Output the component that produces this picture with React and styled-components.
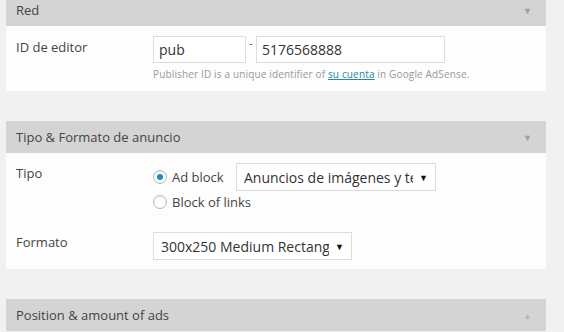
import React from 'react';
import styled, { createGlobalStyle } from 'styled-components';

const GlobalStyle = createGlobalStyle`
  html, body {
    margin: 0;
    padding: 0;
    background: #f1f1f1;
    font-family: "Open Sans", "Liberation Sans", sans-serif;
    color: #444;
    overflow: hidden;
  }
`;

const Page = styled.div`
  width: 540px;
  margin: -6px 0 0 6px;
  display: flex;
  flex-direction: column;
  gap: 30px;
`;

const Panel = styled.section`
  display: flex;
  flex-direction: column;
`;

const PanelHeader = styled.div`
  height: 32px;
  background: #d4d4d4;
  display: flex;
  align-items: center;
  justify-content: space-between;
  padding: 0 14px 0 10px;
  font-size: 13px;
  color: #444;
`;

const Toggle = styled.span`
  font-size: 9px;
  color: ${(p) => (p.$up ? '#b8b8b8' : '#a0a0a0')};
`;

const PanelBody = styled.div`
  background: #fdfdfd;
  padding: ${(p) => p.$pad || '10px 10px 9px'};
  display: flex;
  flex-direction: column;
  gap: ${(p) => p.$gap || 0}px;
`;

const Row = styled.div`
  display: grid;
  grid-template-columns: 137px 1fr;
  align-items: start;
`;

const Label = styled.div`
  font-size: 13px;
  color: #444;
  line-height: 18px;
  padding-top: ${(p) => p.$top || 0}px;
`;

const Field = styled.div`
  display: flex;
  flex-direction: column;
`;

const InputLine = styled.div`
  display: flex;
  align-items: flex-start;
`;

const TextInput = styled.div`
  box-sizing: border-box;
  width: ${(p) => p.$w}px;
  height: 27px;
  border: 1px solid #dddddd;
  background: #fff;
  font-size: 14px;
  color: #333;
  line-height: 25px;
  padding: 0 5px;
`;

const Dash = styled.span`
  width: 10px;
  text-align: center;
  font-size: 11px;
  line-height: 14px;
  color: #555;
`;

const Help = styled.p`
  margin: 4px 0 0;
  font-size: 10px;
  color: #999;
  letter-spacing: 0.15px;
  line-height: 14px;
`;

const Link = styled.a`
  color: #2287a8;
  text-decoration: underline;
`;

const RadioLine = styled.div`
  display: flex;
  align-items: center;
  height: ${(p) => p.$h}px;
`;

const Radio = styled.span`
  box-sizing: border-box;
  width: 14px;
  height: 14px;
  border-radius: 50%;
  border: 1px solid #b4b9be;
  background: #fff;
  box-shadow: inset 0 1px 2px rgba(0, 0, 0, 0.1);
  display: flex;
  align-items: center;
  justify-content: center;
  &::after {
    content: '';
    width: 6px;
    height: 6px;
    border-radius: 50%;
    background: ${(p) => (p.$on ? '#1e8cbe' : 'transparent')};
  }
`;

const RadioText = styled.span`
  font-size: 13px;
  color: #444;
  margin-left: 5px;
  width: ${(p) => (p.$w ? p.$w + 'px' : 'auto')};
`;

const Select = styled.div`
  box-sizing: border-box;
  width: ${(p) => p.$w}px;
  height: 28px;
  border: 1px solid #dddddd;
  background: #fff;
  display: flex;
  align-items: center;
  padding: 0 7px 0 7px;
  font-size: 14px;
  color: #333;
`;

const SelectText = styled.span`
  flex: 1;
  overflow: hidden;
  white-space: nowrap;
`;

const Caret = styled.span`
  font-size: 9px;
  color: #111;
  margin-left: 6px;
`;

export default function App() {
  return (
    <>
      <GlobalStyle />
      <Page>
        <Panel>
          <PanelHeader>
            Red
            <Toggle>▼</Toggle>
          </PanelHeader>
          <PanelBody $pad="10px 10px 10px">
            <Row>
              <Label $top={2}>ID de editor</Label>
              <Field>
                <InputLine>
                  <TextInput $w={93}>pub</TextInput>
                  <Dash>-</Dash>
                  <TextInput $w={189}>5176568888</TextInput>
                </InputLine>
                <Help>
                  Publisher ID is a unique identifier of <Link>su cuenta</Link> in Google AdSense.
                </Help>
              </Field>
            </Row>
          </PanelBody>
        </Panel>

        <Panel>
          <PanelHeader>
            Tipo &amp; Formato de anuncio
            <Toggle>▼</Toggle>
          </PanelHeader>
          <PanelBody $gap={19}>
            <Row>
              <Label $top={1}>Tipo</Label>
              <Field>
                <RadioLine $h={28}>
                  <Radio $on />
                  <RadioText $w={64}>Ad block</RadioText>
                  <Select $w={200}>
                    <SelectText>Anuncios de imágenes y texto</SelectText>
                    <Caret>▼</Caret>
                  </Select>
                </RadioLine>
                <RadioLine $h={22}>
                  <Radio />
                  <RadioText>Block of links</RadioText>
                </RadioLine>
              </Field>
            </Row>
            <Row>
              <Label $top={1}>Formato</Label>
              <Field>
                <Select $w={199}>
                  <SelectText>300x250 Medium Rectangle</SelectText>
                  <Caret>▼</Caret>
                </Select>
              </Field>
            </Row>
          </PanelBody>
        </Panel>

        <Panel>
          <PanelHeader>
            Position &amp; amount of ads
            <Toggle $up>▲</Toggle>
          </PanelHeader>
        </Panel>
      </Page>
    </>
  );
}
